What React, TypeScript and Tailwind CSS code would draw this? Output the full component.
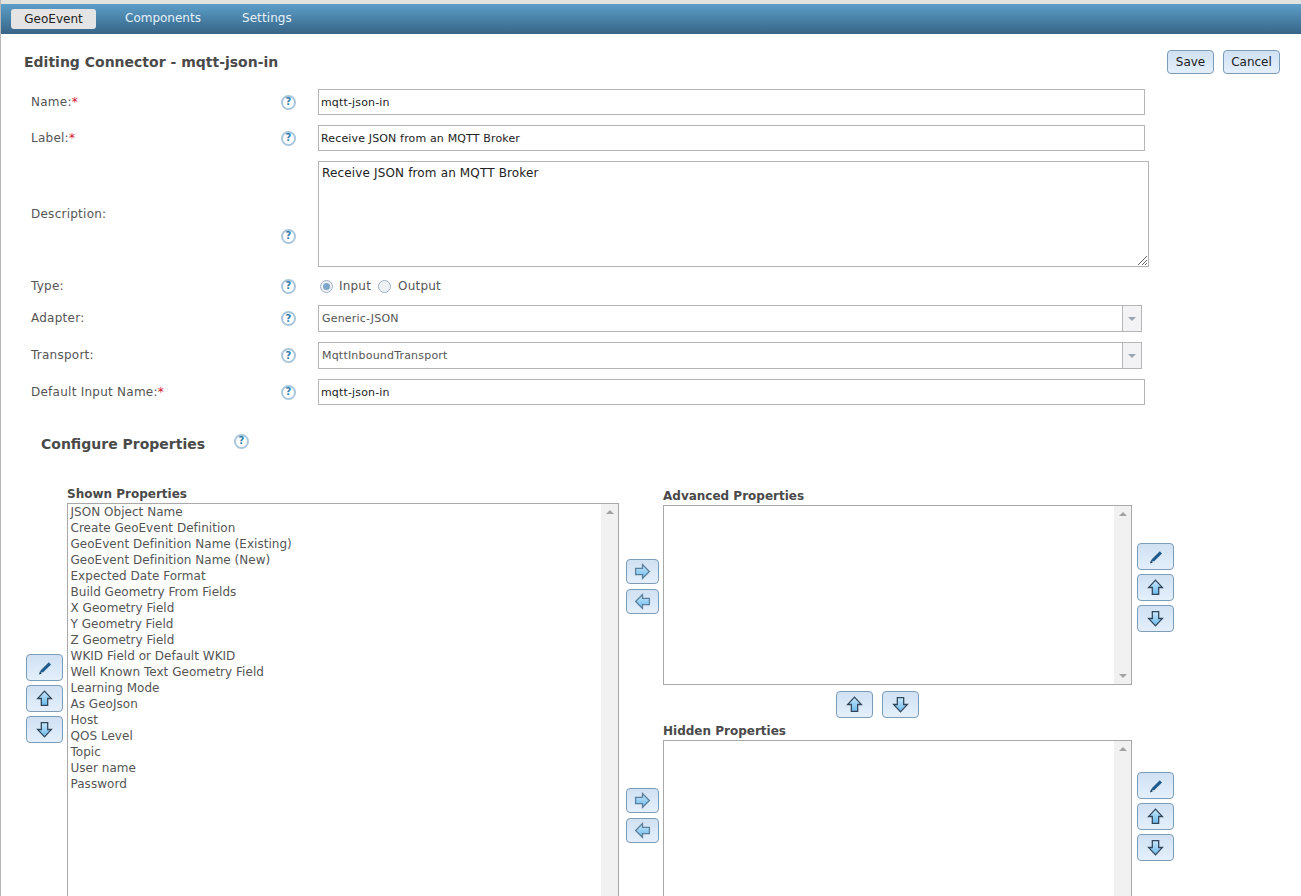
import React from "react";

const shownProperties = [
  "JSON Object Name",
  "Create GeoEvent Definition",
  "GeoEvent Definition Name (Existing)",
  "GeoEvent Definition Name (New)",
  "Expected Date Format",
  "Build Geometry From Fields",
  "X Geometry Field",
  "Y Geometry Field",
  "Z Geometry Field",
  "WKID Field or Default WKID",
  "Well Known Text Geometry Field",
  "Learning Mode",
  "As GeoJson",
  "Host",
  "QOS Level",
  "Topic",
  "User name",
  "Password",
];

function Help() {
  return (
    <span className="flex h-[15px] w-[15px] items-center justify-center rounded-full border-2 border-[#a9c6dc] bg-white text-[10px] font-bold leading-none text-[#2f7fb0]">
      ?
    </span>
  );
}

function Required() {
  return <span className="text-[#d0122c]">*</span>;
}

function Row({
  label,
  required,
  height,
  mt,
  helpClass = "",
  labelClass = "",
  children,
}: {
  label: string;
  required?: boolean;
  height: string;
  mt: string;
  helpClass?: string;
  labelClass?: string;
  children: React.ReactNode;
}) {
  return (
    <div className={`flex items-center ${height} ${mt}`}>
      <div className={`w-[280px] shrink-0 pl-[30px] text-[12px] tracking-[0.25px] text-[#555] ${labelClass}`}>
        {label}
        {required && <Required />}
      </div>
      <div className={`flex w-[37px] shrink-0 ${helpClass}`}>
        <Help />
      </div>
      {children}
    </div>
  );
}

function TextBox({ value }: { value: string }) {
  return (
    <div className="flex h-full w-[827px] items-center border border-[#b5b5b5] bg-white pl-[2px] pt-[3px] text-[11px] tracking-[0.15px] text-[#222]">
      {value}
    </div>
  );
}

function SelectBox({ value }: { value: string }) {
  return (
    <div className="flex h-full w-[824px] items-stretch border border-[#b5b5b5] bg-white text-[11px] tracking-[0.2px] text-[#555]">
      <div className="flex flex-1 items-center pl-[3px] pt-[2px]">{value}</div>
      <div className="flex w-[19px] items-center justify-center border-l border-[#b5b5b5] bg-[#f3f3f5]">
        <span className="h-0 w-0 border-x-[4px] border-t-[4px] border-x-transparent border-t-[#9aa5b1]" />
      </div>
    </div>
  );
}

function Radio({ checked }: { checked?: boolean }) {
  return (
    <span className="flex h-[13px] w-[13px] items-center justify-center rounded-full border border-[#9db2c4] bg-[#eef1f4]">
      {checked && <span className="h-[7px] w-[7px] rounded-full bg-[#7fa6c9]" />}
    </span>
  );
}

type IconKind = "edit" | "up" | "down" | "left" | "right";

const arrowPaths: Record<Exclude<IconKind, "edit">, string> = {
  up: "M8 1 14.5 8H11v6.5H5V8H1.5Z",
  down: "M5 1.5h6V8h3.5L8 15 1.5 8H5Z",
  right: "M1.5 5H8V1.5L14.5 8 8 14.5V11H1.5Z",
  left: "M14.5 5H8V1.5L1.5 8 8 14.5V11h6.5Z",
};

function ToolIcon({ kind }: { kind: IconKind }) {
  if (kind === "edit") {
    return (
      <svg width="16" height="16" viewBox="0 0 16 16">
        <path d="M2.6 12.6 4 10 11.8 2.2 14 4.4 6.2 12.2Z" fill="#1f5b8c" />
        <path d="M2 14.4 2.9 11.8 4.8 13.4Z" fill="#12334f" />
      </svg>
    );
  }
  const sideways = kind === "left" || kind === "right";
  return (
    <svg width="17" height="17" viewBox="0 0 16 16">
      <defs>
        <linearGradient id={`fill-${kind}`} x1="0" y1="0" x2="0" y2="1">
          <stop offset="0" stopColor="#c9e8fb" />
          <stop offset="1" stopColor="#69b9ec" />
        </linearGradient>
      </defs>
      <path
        d={arrowPaths[kind]}
        fill={`url(#fill-${kind})`}
        stroke={sideways ? "#5d7f9c" : "#33475b"}
        strokeWidth="1.2"
      />
    </svg>
  );
}

function ToolButton({ kind, size = "wide" }: { kind: IconKind; size?: "wide" | "narrow" }) {
  const dims = size === "wide" ? "h-[27px] w-[37px]" : "h-[25px] w-[33px]";
  return (
    <div
      className={`flex items-center justify-center rounded-[4px] border border-[#7d9cb8] bg-gradient-to-b from-[#d0e1f3] to-[#e4effb] ${dims}`}
    >
      <ToolIcon kind={kind} />
    </div>
  );
}

function ToolStack({ kinds, className = "" }: { kinds: IconKind[]; className?: string }) {
  return (
    <div className={`flex flex-col gap-[4px] ${className}`}>
      {kinds.map((kind) => (
        <ToolButton key={kind} kind={kind} />
      ))}
    </div>
  );
}

function TextButton({ label, width }: { label: string; width: string }) {
  return (
    <div
      className={`flex h-[24px] items-center justify-center rounded-[4px] border border-[#7d9cb8] bg-gradient-to-b from-[#d0e1f3] to-[#e4effb] text-[12px] text-[#222] ${width}`}
    >
      {label}
    </div>
  );
}

function ListBox({ className, children }: { className: string; children?: React.ReactNode }) {
  return (
    <div className={`flex border border-[#a8a8a8] bg-white ${className}`}>
      <div className="min-w-0 flex-1 pl-[2.5px] text-[12px] leading-[16px] tracking-[0.03px] text-[#555]">{children}</div>
      <div className="flex h-full w-[17px] flex-col items-center justify-between bg-[#f1f1f1] py-[6px]">
        <span className="h-0 w-0 border-x-[4px] border-b-[4px] border-x-transparent border-b-[#a3a3a3]" />
        <span className="h-0 w-0 border-x-[4px] border-t-[4px] border-x-transparent border-t-[#a3a3a3]" />
      </div>
    </div>
  );
}

export default function App() {
  return (
    <div className="h-[896px] w-[1301px] overflow-hidden border-l border-[#b8b8b8] bg-white font-['DejaVu_Sans',sans-serif]">
      <div className="h-[4px] bg-[#e2e2de]" />
      <div className="flex h-[30px] items-center bg-gradient-to-b from-[#5c9fc9] to-[#376587] pl-[10px] text-[12px]">
        <div className="flex h-[20px] w-[85px] items-center justify-center rounded-[3px] bg-[#e4e4e4] text-[#222]">
          GeoEvent
        </div>
        <div className="-mt-[2px] ml-[29px] text-[#e6f1f8]">Components</div>
        <div className="-mt-[2px] ml-[41px] tracking-[0.1px] text-[#e6f1f8]">Settings</div>
      </div>

      <div className="mt-[16px] flex h-[24px] items-center justify-between pl-[23px] pr-[21px]">
        <h1 className="text-[14px] font-bold text-[#4a4a4a]">Editing Connector - mqtt-json-in</h1>
        <div className="flex gap-[9px]">
          <TextButton label="Save" width="w-[47px]" />
          <TextButton label="Cancel" width="w-[57px]" />
        </div>
      </div>

      <Row label="Name:" required height="h-[26px]" mt="mt-[15px]">
        <TextBox value="mqtt-json-in" />
      </Row>
      <Row label="Label:" required height="h-[26px]" mt="mt-[10px]">
        <TextBox value="Receive JSON from an MQTT Broker" />
      </Row>
      <Row label="Description:" height="h-[106px]" mt="mt-[10px]" helpClass="mt-[44px]">
        <div className="relative h-full w-[831px] border border-[#b5b5b5] bg-white px-[3px] pt-[2px] text-[12px] tracking-[0.15px] text-[#222]">
          Receive JSON from an MQTT Broker
          <svg className="absolute bottom-0 right-0" width="11" height="11" viewBox="0 0 11 11">
            <path d="M1 10 10 1M5 10 10 5M8 10 10 8" stroke="#666" strokeWidth="1" />
          </svg>
        </div>
      </Row>
      <Row label="Type:" height="h-[18px]" mt="mt-[10px]">
        <div className="flex items-center pl-[2px] text-[12px] tracking-[0.2px] text-[#555]">
          <Radio checked />
          <span className="ml-[6px]">Input</span>
          <span className="ml-[7px]">
            <Radio />
          </span>
          <span className="ml-[7px]">Output</span>
        </div>
      </Row>
      <Row label="Adapter:" height="h-[27px]" mt="mt-[10px]" labelClass="-mt-[2px]">
        <SelectBox value="Generic-JSON" />
      </Row>
      <Row label="Transport:" height="h-[27px]" mt="mt-[10px]" labelClass="-mt-[2px]">
        <SelectBox value="MqttInboundTransport" />
      </Row>
      <Row label="Default Input Name:" required height="h-[26px]" mt="mt-[10px]">
        <TextBox value="mqtt-json-in" />
      </Row>

      <div className="ml-[40px] mt-[27px] flex h-[24px] items-center">
        <h2 className="w-[193px] text-[14px] font-bold text-[#4a4a4a]">Configure Properties</h2>
        <div className="-mt-[6px]">
          <Help />
        </div>
      </div>

      <div className="mt-[30px] flex items-start">
        <ToolStack kinds={["edit", "up", "down"]} className="ml-[25px] mt-[168px]" />
        <div className="ml-[4px] w-[552px]">
          <div className="h-[17px] text-[12px] font-bold leading-[16px] text-[#4a4a4a]">Shown Properties</div>
          <ListBox className="h-[500px] w-[552px]">
            {shownProperties.map((name) => (
              <div key={name}>{name}</div>
            ))}
          </ListBox>
        </div>

        <div className="ml-[7px] flex flex-col">
          <div className="mt-[73px] flex flex-col gap-[5px]">
            <ToolButton kind="right" size="narrow" />
            <ToolButton kind="left" size="narrow" />
          </div>
          <div className="mt-[174px] flex flex-col gap-[5px]">
            <ToolButton kind="right" size="narrow" />
            <ToolButton kind="left" size="narrow" />
          </div>
        </div>

        <div className="ml-[4px] mt-[2px] w-[469px]">
          <div className="h-[17px] text-[12px] font-bold leading-[16px] text-[#4a4a4a]">Advanced Properties</div>
          <ListBox className="h-[180px] w-[469px]" />
          <div className="ml-[173px] mt-[6px] flex gap-[9px]">
            <ToolButton kind="up" />
            <ToolButton kind="down" />
          </div>
          <div className="mt-[5px] h-[17px] text-[12px] font-bold leading-[16px] text-[#4a4a4a]">Hidden Properties</div>
          <ListBox className="h-[300px] w-[469px]" />
        </div>

        <div className="ml-[5px] flex flex-col">
          <ToolStack kinds={["edit", "up", "down"]} className="mt-[57px]" />
          <ToolStack kinds={["edit", "up", "down"]} className="mt-[140px]" />
        </div>
      </div>
    </div>
  );
}
